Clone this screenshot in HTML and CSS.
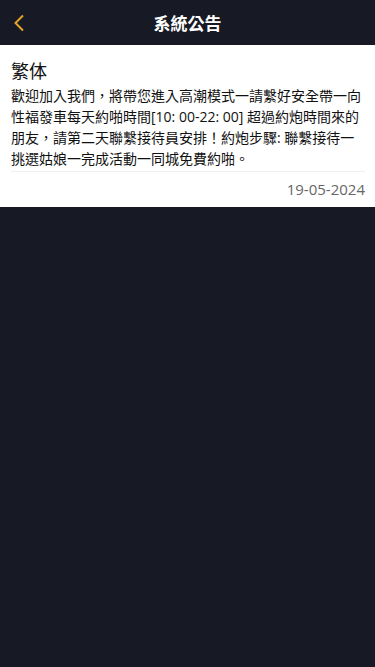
FILE: index.html
```html
<!DOCTYPE html>
<html lang="zh-Hant">
<head>
<meta charset="utf-8">
<meta name="viewport" content="width=device-width, initial-scale=1">
<link rel="stylesheet" href="styles.css">
</head>
<body>
<header class="nav">
  <span class="back"><svg width="12" height="18" viewBox="0 0 12 18"><path d="M10 1.5 L2.5 9 L10 16.5" fill="none" stroke="#e3a42a" stroke-width="2"/></svg></span>
  <h1 class="nav-title">系統公告</h1>
</header>
<main class="card">
  <h2 class="title">繁体</h2>
  <p class="body">歡迎加入我們，將帶您進入高潮模式一請繫好安全帶一向性福發車每天約啪時間[10: 00-22: 00] 超過約炮時間來的朋友，請第二天聯繫接待員安排！約炮步驟: 聯繫接待一挑選姑娘一完成活動一同城免費約啪。</p>
  <div class="date">19-05-2024</div>
</main>
</body>
</html>
```
FILE: styles.css
```css
html, body { margin: 0; padding: 0; }
body {
  background: #171a24;
  font-family: "Open Sans", "Noto Sans CJK TC", sans-serif;
  min-height: 667px;
}
.nav {
  height: 45px;
  display: flex;
  align-items: center;
  justify-content: center;
  position: relative;
}
.back {
  position: absolute;
  left: 13px;
  top: 14px;
  display: flex;
}
.nav-title {
  margin: 0;
  color: #fff;
  font-size: 17px;
  font-weight: 700;
  font-family: "Noto Sans CJK TC", sans-serif;
}
.card {
  background: #fff;
  padding: 11px 10px 7px 11px;
}
.title {
  margin: 0 0 1px;
  font-size: 18px;
  font-weight: 400;
  line-height: 28px;
  color: #111;
  font-family: "Noto Sans CJK TC", sans-serif;
}
.body {
  margin: 0;
  font-size: 14px;
  line-height: 21px;
  color: #111;
  padding-bottom: 2px;
  border-bottom: 1px solid #eee;
}
.date {
  text-align: right;
  font-size: 15px;
  color: #666;
  line-height: 22px;
  padding-top: 6px;
}
```
